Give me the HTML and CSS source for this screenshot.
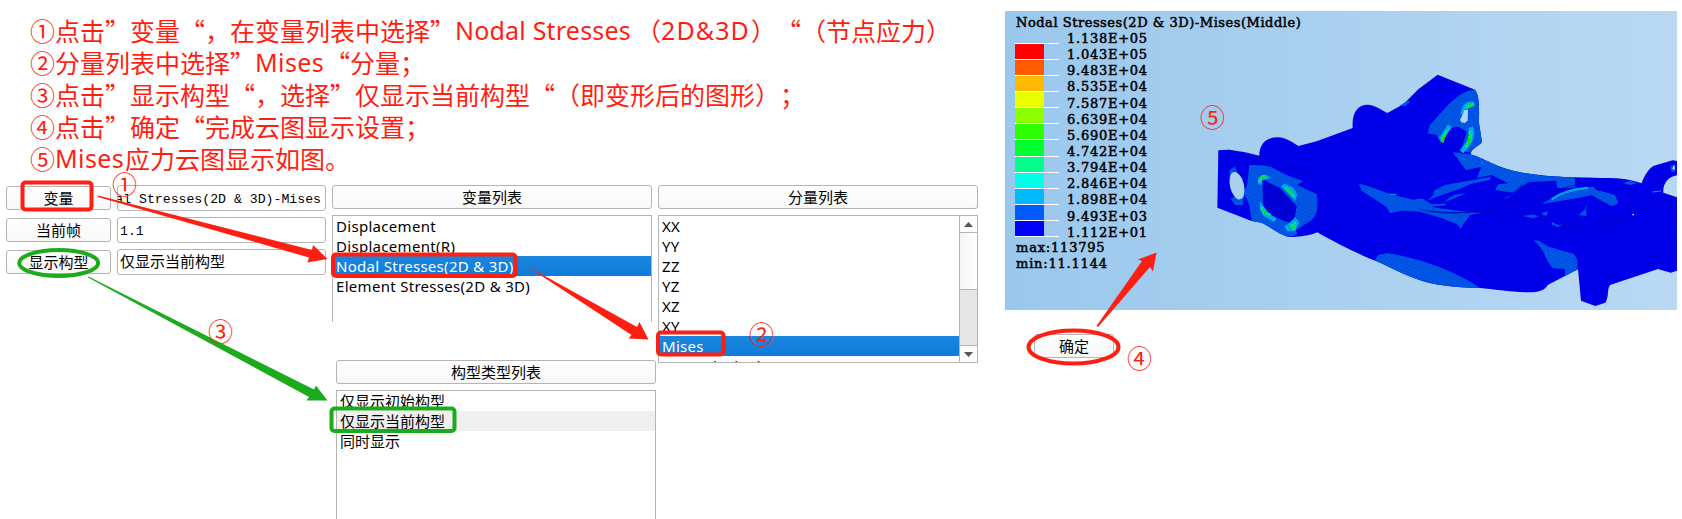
FILE: index.html
```html
<!DOCTYPE html>
<html lang="zh-CN">
<head>
<meta charset="utf-8">
<title>云图显示设置</title>
<link rel="stylesheet" href="styles.css">
</head>
<body>
<main class="page">
  <section class="left">
    <div class="steps">
      <p>①点击”变量“，在变量列表中选择”<span class="lat w-nodal">Nodal Stresses</span>（<span class="lat w-dim">2D&amp;3D</span>）<span class="open">“</span>（节点应力）</p>
      <p>②分量列表中选择”<span class="lat w-mises">Mises</span>“分量；</p>
      <p>③点击”显示构型“，选择”仅显示当前构型“（即变形后的图形）；</p>
      <p>④点击”确定“完成云图显示设置；</p>
      <p>⑤<span class="lat w-mises">Mises</span>应力云图显示如图。</p>
    </div>
    <div class="panels">
      <div class="form">
        <div class="row"><button class="btn">变量</button><div class="field right"><span>al Stresses(2D &amp; 3D)-Mises</span></div></div>
        <div class="row"><button class="btn">当前帧</button><div class="field">1.1</div></div>
        <div class="row"><button class="btn">显示构型</button><div class="field cjk">仅显示当前构型</div></div>
      </div>
      <div class="col">
        <div class="head">变量列表</div>
        <ul class="list vars">
          <li>Displacement</li>
          <li>Displacement(R)</li>
          <li class="sel">Nodal Stresses(2D &amp; 3D)</li>
          <li>Element Stresses(2D &amp; 3D)</li>
        </ul>
        <div class="config">
          <div class="head">构型类型列表</div>
          <ul class="list types">
            <li>仅显示初始构型</li>
            <li class="cur">仅显示当前构型</li>
            <li>同时显示</li>
          </ul>
        </div>
      </div>
      <div class="col">
        <div class="head">分量列表</div>
        <div class="list comps">
          <ul class="items">
            <li>XX</li><li>YY</li><li>ZZ</li><li>YZ</li><li>XZ</li><li>XY</li>
            <li class="sel">Mises</li><li>Max Principal</li>
          </ul>
          <div class="scroll">
            <div class="arrow"><svg width="9" height="5"><path d="M0 5L4.500 0L9 5Z" fill="#555"/></svg></div>
            <div class="thumb"></div>
            <div class="track"></div>
            <div class="arrow down"><svg width="9" height="5"><path d="M0 0L4.500 5L9 0Z" fill="#555"/></svg></div>
          </div>
        </div>
      </div>
    </div>
  </section>

  <section class="result">
    <div class="plot">
      <svg class="model" viewBox="-585 -147 2016 897" width="672" height="299">
        <defs>
          <pattern id="mesh" width="15" height="12" patternUnits="userSpaceOnUse" patternTransform="rotate(-14)">
            <path d="M0 0h3v3h-3zM7 6h3v3h-3z" fill="#000050" opacity=".38"/>
          </pattern>
          <path id="body" d="M55 271L88 269L135 277L178 287C178 245 205 232 232 232C262 233 280 250 295 258L350 244L458 204C455 155 475 133 505 134C530 137 548 152 562 159L610 133L655 88L713 44L825 89C840 110 837 150 837 190L846 247C830 262 815 265 812 283C860 298 900 330 980 340C1050 352 1120 352 1250 355C1290 357 1315 368 1325 370C1333 345 1348 325 1360 318L1418 301L1431 303V346C1405 350 1388 370 1390 398L1431 412V632L1412 638L1374 627L1230 675C1220 690 1228 710 1216 728L1186 738L1143 722L1134 628L1043 675C1035 690 1020 697 985 697C930 695 880 688 840 684C760 682 700 676 650 657C600 640 560 615 520 600C470 580 400 545 352 517C320 530 285 532 265 530C240 525 210 500 185 488L155 483L52 443Z"/>
        </defs>
        <use href="#body" fill="#0000ef"/>
        <g fill="#0057ea">
          <path d="M148 315L205 317L260 345L310 364L290 374L350 402C355 440 352 465 335 480L285 512C300 520 290 530 265 530C240 525 210 500 185 488L155 483L148 435L132 400L142 370Z"/>
          <path d="M88 330L105 320L113 340L127 355L135 400L128 435L105 436L92 415L115 408L90 365Z"/>
          <path d="M598 138L625 120L630 127L615 138Z"/>
          <path d="M683 220L690 195L735 145C765 110 800 88 825 89C840 110 837 150 837 190L846 247C830 262 815 265 812 278L782 272L800 215L775 200L750 203L722 248L710 225Z"/>
          <path d="M758 277L812 283C860 298 900 330 980 340C1030 350 1080 351 1125 352V382L1105 384L1072 384L1068 362L985 366L960 383L925 412L905 416L945 399L885 390L895 373L925 370L875 345L830 354L845 320L798 331Z"/>
          <path d="M1025 432L1058 413C1080 398 1120 387 1165 382L1180 380L1190 390L1210 395L1245 405L1255 430L1235 439L1205 422L1175 406L1115 417Z"/>
          <path d="M702 392L735 375L873 350L870 359L812 372L780 386L715 409L675 425L690 432L735 431L740 436L695 439L675 430L700 405Z"/>
          <path d="M745 415L765 404L799 399L765 414L735 426Z"/>
          <path d="M477 371L505 379L570 402L640 419L665 415L690 430L700 442L780 453L850 458L811 464L790 492L783 506L770 492L725 474L660 455L605 452L570 460L560 441L515 412L485 392Z"/>
          <path d="M525 600L535 584L560 580C650 590 770 635 840 684C760 682 700 676 650 657C600 640 560 615 525 600Z"/>
          <path d="M1000 540L1018 543L1045 560L1122 582L1132 600V628L1095 648V627L1058 625L1045 607L1025 566Z"/>
          <path d="M1165 421L1155 448L1136 465L1160 468L1158 445Z"/>
          <path d="M967 468L1000 464L1015 469L1000 475Z"/>
          <path d="M1026 458L1045 454L1040 467L1028 466Z"/>
          <path d="M1056 486L1075 495L1090 494L1070 502Z"/>
          <path d="M1268 369L1290 362L1312 370L1290 375Z"/>
          <path d="M1411 320L1421 313L1425 335L1414 335Z"/>
        </g>
        <path d="M187 355L210 370L240 384C255 402 280 425 290 440L280 492L245 480L190 455Z" fill="#0000dc"/>
        <path d="M175 373C168 350 187 340 200 346L213 354L185 362L187 374ZM242 378L255 371L280 383L292 405L286 423L263 400ZM180 425L190 437L210 464L230 475L222 487L190 467L179 448ZM253 499L268 489L286 472L298 487L286 514L262 514Z" fill="#00aef2"/>
        <g fill="none" stroke-linecap="square">
          <path d="M180 362L185 352L195 349M259 386L271 396L280 408M187 446L193 459L209 464M274 497L284 491L282 506" stroke="#00e889" stroke-width="8"/>
          <path d="M184 353L193 349M263 390L273 398M190 454L197 460M278 499L281 502" stroke="#20e900" stroke-width="6"/>
          <path d="M790 158C792 140 803 129 815 132M814 209C820 230 810 246 789 270M746 203L726 233" stroke="#00b4ef" stroke-width="14"/>
          <path d="M803 141L818 134M810 217L812 235L799 258M738 215L727 240" stroke="#00e786" stroke-width="9"/>
          <path d="M809 137L816 135M808 229L804 250M732 229L728 244" stroke="#24e900" stroke-width="7"/>
          <path d="M1058 416C1085 397 1120 387 1161 384" stroke="#00abe8" stroke-width="7"/>
          <path d="M570 403L588 403M845 305L847 311M1058 490L1060 495M1358 396L1382 393" stroke="#00a9e6" stroke-width="3"/>
          <path d="M660 447C740 475 880 450 930 425C970 405 1000 370 1060 365M690 453C800 465 920 457 990 423C1040 405 1060 390 1125 375M910 412C940 405 950 385 965 376M850 460L960 462L1030 435M1080 500L1190 496L1340 444L1430 414M1150 520L1290 475M180 295C230 310 270 330 330 342M88 270L200 317L250 325" stroke="#0000b4" stroke-width="2"/>
        </g>
        <use href="#body" fill="url(#mesh)"/>
        <ellipse cx="111" cy="377" rx="21" ry="42" transform="rotate(-13 111 377)" fill="#a7cff0"/>
        <path d="M780 180L794 150L804 149L803 181L795 189L784 187Z" fill="#b1d4f1"/>
        <path d="M1417 325L1424 314V331Z" fill="#d8e9f5"/>
        <path d="M1297 462h5v4h-5z" fill="#bbe0df"/>
      </svg>
      <div class="legend">
        <div class="title">Nodal Stresses(2D &amp; 3D)-Mises(Middle)</div>
        <div class="scale">
          <div class="bars">
            <i class="c1"></i><i class="c2"></i><i class="c3"></i><i class="c4"></i><i class="c5"></i><i class="c6"></i><i class="c7"></i><i class="c8"></i><i class="c9"></i><i class="c10"></i><i class="c11"></i><i class="c12"></i><i class="end"></i>
          </div>
          <div class="nums">
            <span>1.138E+05</span><span>1.043E+05</span><span>9.483E+04</span><span>8.535E+04</span><span>7.587E+04</span><span>6.639E+04</span><span>5.690E+04</span><span>4.742E+04</span><span>3.794E+04</span><span>2.846E+04</span><span>1.898E+04</span><span>9.493E+03</span><span>1.112E+01</span>
          </div>
        </div>
        <div class="mm">max:113795</div>
        <div class="mm">min:11.1144</div>
      </div>
    </div>
    <button class="btn ok">确定</button>
  </section>

  <svg class="marks" width="1682" height="519" viewBox="0 0 1682 519">
    <g fill="none" stroke="#ff1f12" stroke-width="4">
      <rect x="22.500" y="182.500" width="69" height="27" rx="3"/>
      <rect x="333" y="254.500" width="182.500" height="21.500" rx="3"/>
      <rect x="658" y="332.500" width="65.500" height="22" rx="3"/>
      <ellipse cx="1073.500" cy="347" rx="45" ry="16.500"/>
    </g>
    <g fill="none" stroke="#1cab1c" stroke-width="4">
      <ellipse cx="58.700" cy="263" rx="39.500" ry="13"/>
      <rect x="331.500" y="408.500" width="123" height="22.500" rx="3"/>
    </g>
    <g fill="#ff1f12">
      <path d="M98 195.500L312 250L313 245L327.500 259L307.500 262.500L309 257.500L98 197Z"/>
      <path d="M525 265L637 327L639.500 322L648.500 339.500L628.500 338.500L631.500 335Z"/>
      <path d="M1096.500 326L1142 261L1138 259.500L1156.500 252.500L1153 271.500L1150 267L1098 327Z"/>
    </g>
    <path d="M88.500 276.500L314 389.500L316 385.500L327.500 400.500L306.500 400.500L309 397L88 277.500Z" fill="#1cab1c"/>
    <g class="nums-marks" text-anchor="middle">
      <text x="124.500" y="193.500">①</text><text x="761.500" y="343.500">②</text><text x="220.500" y="340.500">③</text><text x="1139.500" y="367.500">④</text><text x="1212.500" y="126.500">⑤</text>
    </g>
  </svg>
</main>
</body>
</html>
```
FILE: styles.css
```css
* { box-sizing: border-box; }
body { margin: 0; background: #fff; font-family: "Noto Sans", "Noto Sans CJK SC", sans-serif; color: #000; }
p, ul { margin: 0; padding: 0; list-style: none; }
.page { position: relative; display: flex; width: 1682px; height: 519px; overflow: hidden; }
.left { width: 978px; flex: none; padding-top: 14px; }
.steps { height: 171px; padding-left: 30px; color: #ff1f12; font: 25px/32px "Noto Sans CJK SC", sans-serif; }
.steps p { height: 32px; white-space: nowrap; text-spacing-trim: space-all; }
.lat { display: inline-block; font-family: "Noto Sans", sans-serif; height: 32px; vertical-align: top; }
.w-nodal { width: 181px; letter-spacing: .2px; }
.w-dim { width: 90px; letter-spacing: 1.1px; }
.w-mises { width: 70px; letter-spacing: .4px; }
.open { display: inline-block; width: 25px; text-align: right; }
.panels { display: flex; gap: 6px; padding-left: 6px; }
.form { width: 320px; display: flex; flex-direction: column; gap: 6px; }
.row { display: flex; gap: 6px; align-items: center; height: 26px; }
.btn, .head { border: 1px solid #b4b4b4; border-radius: 3px; background: linear-gradient(#fff, #f8f8f8); height: 24px; padding: 0; font: 15px/21px "Noto Sans CJK SC", sans-serif; color: #000; text-align: center; }
.btn { width: 105px; flex: none; padding-bottom: 1px; line-height: 20px; }
.field { width: 209px; height: 26px; border: 1px solid #b4b4b4; border-radius: 3px; padding: 0 2px; font: 13.2px/27px "Liberation Mono", monospace; overflow: hidden; white-space: nowrap; }
.field.right { display: flex; justify-content: flex-end; padding-right: 4px; }
.field.cjk { font: 15px/22px "Noto Sans CJK SC", sans-serif; }
.col { width: 320px; flex: none; }
.list { margin-top: 6px; border: 1px solid #b4b4b4; font-size: 15px; line-height: 20px; overflow: hidden; }
.list li { height: 20px; padding-left: 3px; line-height: 20px; white-space: nowrap; }
.vars { height: 107px; border-bottom: 0; letter-spacing: .3px; }
.sel { background: linear-gradient(#1a86dc, #0e7cdb); color: #fff; }
.config { margin: 38px 0 0 4px; width: 320px; }
.types { height: 129px; border-bottom: 0; font-family: "Noto Sans CJK SC", sans-serif; }
.types li { line-height: 19px; }
.cur { background: #efefef; }
.comps { height: 148px; display: flex; letter-spacing: .3px; }
.items { flex: 1; }
.scroll { width: 18px; border-left: 1px solid #b4b4b4; display: flex; flex-direction: column; }
.arrow { height: 17px; display: flex; align-items: center; justify-content: center; border-bottom: 1px solid #b4b4b4; background: #fcfcfc; }
.arrow.down { border-bottom: 0; border-top: 1px solid #b4b4b4; }
.thumb { height: 57px; background: linear-gradient(90deg, #f5f5f5, #fff); border-bottom: 1px solid #b4b4b4; }
.track { flex: 1; background: #e6e6e6; }
.result { margin-left: 27px; padding-top: 11px; width: 672px; flex: none; }
.plot { display: grid; height: 299px; background: linear-gradient(90deg, #9ac8ed, #b9d9f3); }
.model, .legend { grid-area: 1 / 1; }
.model { display: block; }
.legend { padding: 4px 0 0 10px; font: 13px/16px "DejaVu Serif", serif; letter-spacing: .53px; -webkit-text-stroke: .5px #000; }
.title { height: 16px; padding-left: 1px; white-space: nowrap; }
.scale { display: flex; height: 209px; }
.bars { width: 44px; padding-top: 12px; }
.bars i { display: block; height: 16.08px; border-top: 1px solid #fff; background: linear-gradient(90deg, var(--c) 29px, transparent 29px); }
.bars .end { height: 1px; }
.c1 { --c: #ff0000; } .c2 { --c: #ff5c00; } .c3 { --c: #ffb900; } .c4 { --c: #e8ff00; }
.c5 { --c: #8bff00; } .c6 { --c: #2eff00; } .c7 { --c: #00ff2e; } .c8 { --c: #00ff8b; }
.c9 { --c: #00ffe8; } .c10 { --c: #00b9ff; } .c11 { --c: #005cff; } .c12 { --c: #0000ff; }
.nums { padding-left: 8px; letter-spacing: .75px; }
.nums span { display: block; height: 16.15px; white-space: nowrap; }
.mm { height: 16px; padding-left: 1px; letter-spacing: .8px; }
.ok { display: block; width: 80px; margin: 24px 0 0 29px; }
.marks { position: absolute; left: 0; top: 0; pointer-events: none; }
.nums-marks { font: 25px "Noto Sans CJK SC", sans-serif; fill: #ff1f12; }
```
